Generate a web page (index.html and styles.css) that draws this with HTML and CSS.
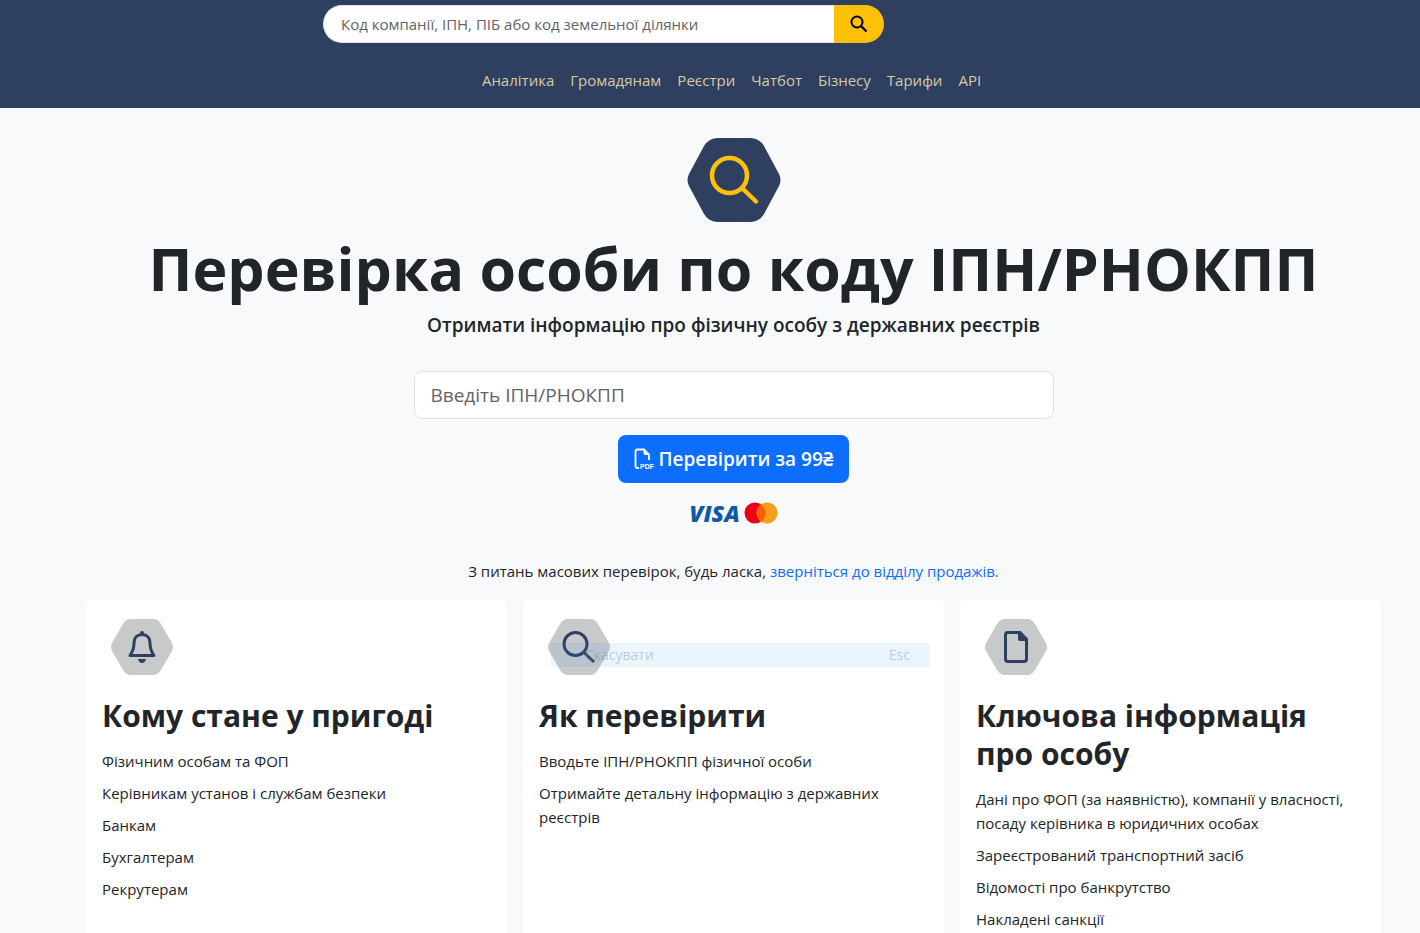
FILE: index.html
```
<!DOCTYPE html>
<html lang="uk">
<head>
<meta charset="utf-8">
<meta name="viewport" content="width=device-width, initial-scale=1">
<title>Перевірка особи по коду ІПН/РНОКПП</title>
<link rel="stylesheet" href="styles.css">
</head>
<body>
<header class="header">
	<form class="search">
		<input type="text" class="search-input" aria-label="Пошук" placeholder="Код компанії, ІПН, ПІБ або код земельної ділянки">
		<button type="submit" class="search-btn" aria-label="Шукати">
			<svg width="18" height="18" viewBox="0 0 18 18" fill="none" stroke="#000" stroke-width="2"><circle cx="7" cy="7" r="5.5"/><path d="M11 11l5.5 5.5" stroke-width="2.4"/></svg>
		</button>
	</form>
	<nav class="nav">
		<a href="#">Аналітика</a>
		<a href="#">Громадянам</a>
		<a href="#">Реєстри</a>
		<a href="#">Чатбот</a>
		<a href="#">Бізнесу</a>
		<a href="#">Тарифи</a>
		<a href="#">API</a>
	</nav>
</header>

<main class="main">
	<section class="hero">
		<svg class="hero-icon" width="94" height="86" viewBox="0 0 94 86">
			<path fill="#2f3f60" d="M31 1h32q9 0 14 8l15 28q3 6 0 12L77 77q-5 8-14 8H31q-9 0-14-8L2 49q-3-6 0-12L17 9q5-8 14-8z"/>
			<g fill="none" stroke="#ffc107" stroke-width="4.5" stroke-linecap="round"><circle cx="42.5" cy="38.5" r="17.5"/><path d="M55 51l14 13.500"/></g>
		</svg>
		<h1>Перевірка особи по коду ІПН/РНОКПП</h1>
		<p class="lead">Отримати інформацію про фізичну особу з державних реєстрів</p>
		<form class="check">
			<input type="text" class="check-input" aria-label="ІПН/РНОКПП" placeholder="Введіть ІПН/РНОКПП">
			<button type="submit" class="check-btn">
				<svg width="21" height="22" viewBox="0 0 21 22">
					<path fill="none" stroke="#fff" stroke-width="1.8" d="M5 20H3.500Q1.500 20 1.500 18V3.500Q1.500 1.500 3.500 1.500H10L15 6.500V12"/>
					<path fill="#fff" d="M9.500 1l6 6h-4q-2 0-2-2z"/>
					<text x="6" y="21" class="pdf">PDF</text>
				</svg>
				<span>Перевірити за 99₴</span>
			</button>
		</form>
		<div class="pay">
			<span class="visa">VISA</span>
			<svg width="34" height="22" viewBox="0 0 34 22">
				<circle cx="11" cy="11" r="10.500" fill="#eb001b"/>
				<circle cx="23" cy="11" r="10.500" fill="#f79e1b"/>
				<path fill="#ff5f00" d="M17 2.400a10.500 10.500 0 0 1 0 17.200a10.500 10.500 0 0 1 0-17.200z"/>
			</svg>
		</div>
		<p class="note">З питань масових перевірок, будь ласка, <a href="#">зверніться до відділу продажів.</a></p>
	</section>

	<section class="cards">
		<div class="card">
			<svg class="card-icon" width="62" height="56" viewBox="0 0 62 56">
				<path fill="#c8c9ca" d="M20 0h22q5 0 8 5l11 19q2 4 0 8L50 51q-3 5-8 5H20q-5 0-8-5L1 32q-2-4 0-8L12 5q3-5 8-5z"/>
				<path fill="none" stroke="#2f3f60" stroke-width="3" stroke-linejoin="round" d="M31 15.500c-5 0-8 3.500-8 8.500c0 6-1.500 9-4 12.500h24c-2.500-3.500-4-6.500-4-12.500c0-5-3-8.500-8-8.500z"/>
				<circle cx="31" cy="14" r="2" fill="#2f3f60"/>
				<path fill="#2f3f60" d="M27 40h8q-1 4-4 4t-4-4z"/>
			</svg>
			<h2>Кому стане у пригоді</h2>
			<p>Фізичним особам та ФОП</p>
			<p>Керівникам установ і службам безпеки</p>
			<p>Банкам</p>
			<p>Бухгалтерам</p>
			<p>Рекрутерам</p>
		</div>
		<div class="card">
			<svg class="card-icon" width="62" height="56" viewBox="0 0 62 56">
				<path fill="#c8c9ca" d="M20 0h22q5 0 8 5l11 19q2 4 0 8L50 51q-3 5-8 5H20q-5 0-8-5L1 32q-2-4 0-8L12 5q3-5 8-5z"/>
				<g fill="none" stroke="#2f3f60" stroke-width="3"><circle cx="27.500" cy="25" r="11.500"/><path d="M36 33.500l10 9.500"/></g>
			</svg>
			<div class="hint"><span>Скасувати</span><span>Esc</span></div>
			<h2>Як перевірити</h2>
			<p>Вводьте ІПН/РНОКПП фізичної особи</p>
			<p>Отримайте детальну інформацію з державних реєстрів</p>
		</div>
		<div class="card">
			<svg class="card-icon" width="62" height="56" viewBox="0 0 62 56">
				<path fill="#c8c9ca" d="M20 0h22q5 0 8 5l11 19q2 4 0 8L50 51q-3 5-8 5H20q-5 0-8-5L1 32q-2-4 0-8L12 5q3-5 8-5z"/>
				<path fill="none" stroke="#2f3f60" stroke-width="3" d="M23 13.500h12l6.500 6.500v20q0 2.500-2.500 2.500H23q-2.500 0-2.500-2.500V16q0-2.500 2.500-2.500z"/>
				<path fill="#2f3f60" d="M33 12l10 10h-8q-2 0-2-2z"/>
			</svg>
			<h2>Ключова інформація про особу</h2>
			<p>Дані про ФОП (за наявністю), компанії у власності, посаду керівника в юридичних особах</p>
			<p>Зареєстрований транспортний засіб</p>
			<p>Відомості про банкрутство</p>
			<p>Накладені санкції</p>
		</div>
	</section>
</main>
</body>
</html>
```
FILE: styles.css
```
*{ box-sizing:border-box;}
body{ margin:0; background:#f8f9fb; color:#212529; font:15px/24px "Open Sans","Noto Sans",sans-serif;}
h1,h2,p{ margin:0;}
a{ color:#0d6efd; text-decoration:none;}
input,button{ font:inherit;}

/* header */
.header{ padding:5px 0 16px; background:#2f3f60;}
.search{ display:flex; justify-content:center; height:38px; margin-bottom:25px; padding-right:213px;}
.search-input{ width:511px; min-width:0; padding:0 17px; border:1px solid #dee2e6; border-right:0; border-radius:19px 0 0 19px; background:#fff;}
.search-btn{ display:flex; align-items:center; justify-content:center; width:50px; padding:0; border:0; border-radius:0 19px 19px 0; background:#ffc107;}
.nav{ display:flex; justify-content:center; gap:16px; padding-left:43px;}
.nav a{ color:#d6cba6;}
::placeholder{ color:#5f6469; opacity:1;}

/* hero */
.main{ padding:29px 39px 16px 86px;}
.hero{ display:flex; flex-direction:column; align-items:center; text-align:center;}
h1{ margin:9px 0; font-size:59px; line-height:72px; font-weight:700;}
.lead{ font-size:19px; font-weight:600; margin-bottom:34px;}
.check{ display:flex; flex-direction:column; align-items:center; gap:16px; width:640px; max-width:100%;}
.check-input{ width:100%; height:48px; padding:0 16px; border:1px solid #dee2e6; border-radius:8px; background:#fff; font-size:19px;}
.check-btn{ display:flex; align-items:center; gap:4px; height:48px; padding:0 16px; border:0; border-radius:8px; background:#0d6efd; color:#fff; font-size:19px; font-weight:600;}
.pdf{ fill:#fff; font:700 7px "Liberation Sans",sans-serif;}
.pay{ display:flex; align-items:center; gap:4px; height:22px; margin:19px 0 35px;}
.visa{ color:#0e5ba5; font-size:23px; font-style:italic; font-weight:800;}

/* cards */
.cards{ display:grid; grid-template-columns:repeat(3,1fr); gap:16px; margin-top:16px;}
.card{ position:relative; min-height:350px; padding:20px 16px 16px; border-radius:8px; background:#fff;}
.card-icon{ display:block; margin:0 0 22px 9px;}
h2{ margin-bottom:14px; font-size:30px; line-height:38px; font-weight:700;}
.card p{ margin-bottom:8px;}
.hint{ position:absolute; top:44px; left:28px; right:14px; display:flex; justify-content:space-between; padding:0 20px 0 34px; border-radius:2px; background:rgba(60,155,250,.1); color:rgba(110,115,120,.35); font-size:14px;}
```
